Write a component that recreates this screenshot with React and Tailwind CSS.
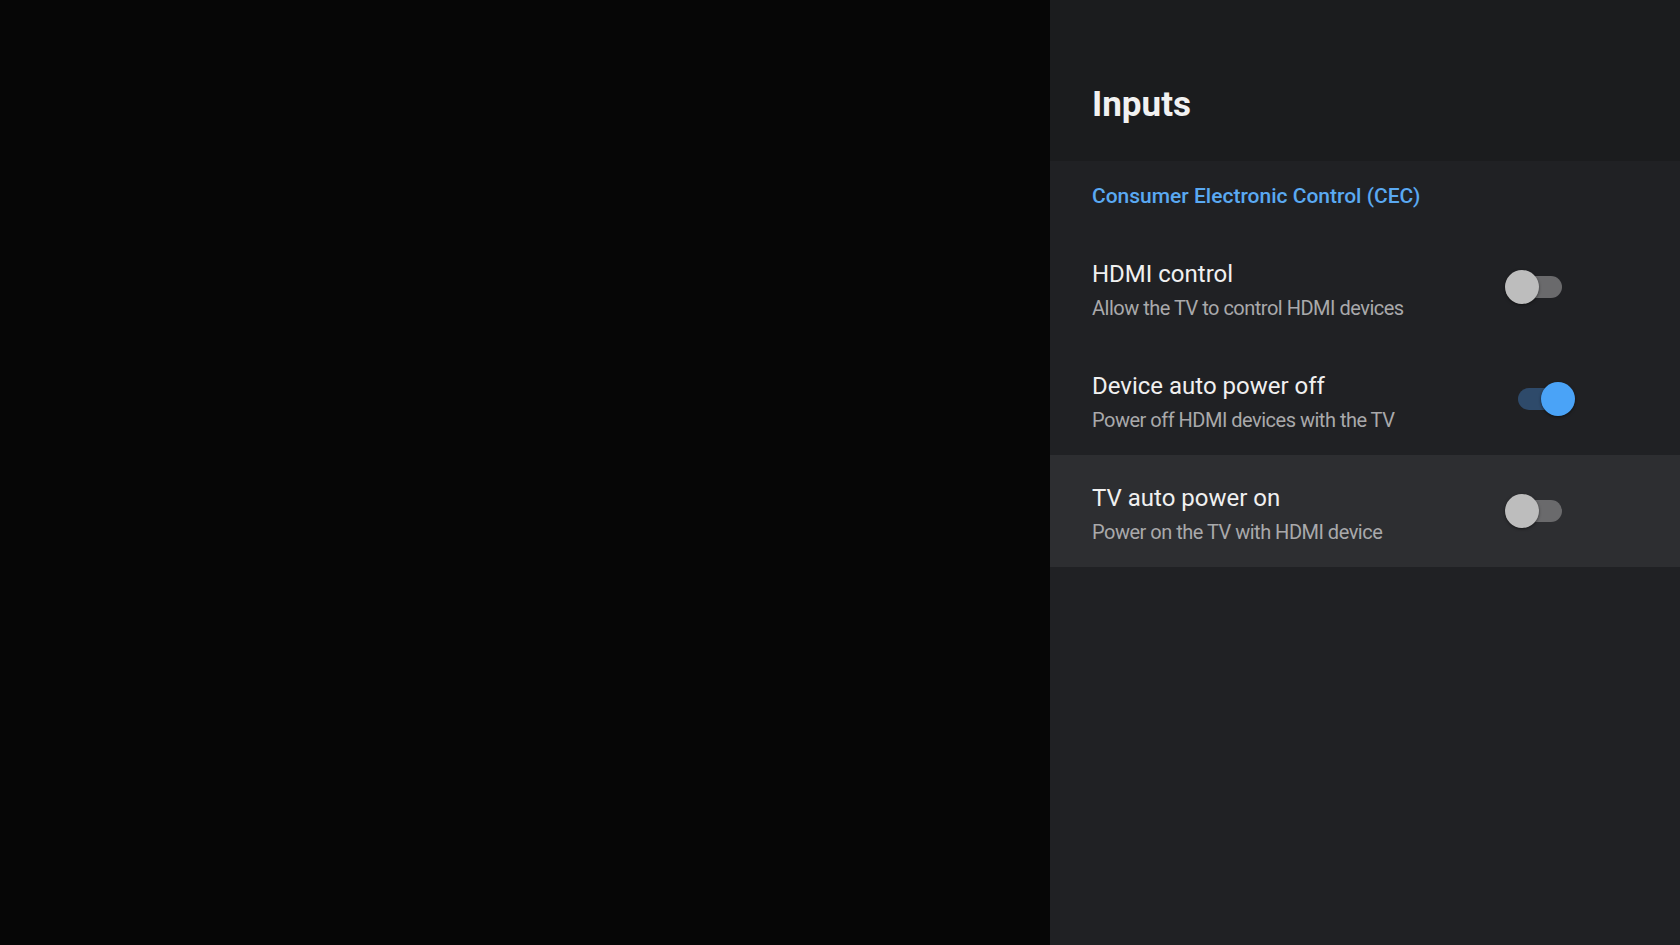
import React from 'react';

const rows = [
  { title: 'HDMI control', subtitle: 'Allow the TV to control HDMI devices', on: false, focused: false },
  { title: 'Device auto power off', subtitle: 'Power off HDMI devices with the TV', on: true, focused: false },
  { title: 'TV auto power on', subtitle: 'Power on the TV with HDMI device', on: false, focused: true },
];

function Toggle({ on }) {
  return (
    <div className="relative w-[70px] h-[34px] shrink-0">
      <div
        className={
          'absolute left-[13px] right-[13px] top-[6px] h-[22px] rounded-full ' +
          (on ? 'bg-[#2e4a6a]' : 'bg-[#6a6a6c]')
        }
      />
      <div
        className={
          'absolute top-0 w-[34px] h-[34px] rounded-full shadow-[0_1px_3px_rgba(0,0,0,0.5)] ' +
          (on ? 'right-0 bg-[#4aa3f7]' : 'left-0 bg-[#bdbdbd]')
        }
      />
    </div>
  );
}

export default function App() {
  return (
    <div className="w-[1680px] h-[945px] flex bg-[#060606] overflow-hidden" style={{ fontFamily: 'Roboto, "Noto Sans", sans-serif' }}>
      <div className="flex-1" />
      <div className="w-[630px] h-full flex flex-col bg-[#202124]">
        <div className="h-[161px] bg-[#1b1c1e] pt-[83px] pl-[42px]">
          <h1 className="text-[35px] leading-[44px] font-bold text-[#f1f1f1]">Inputs</h1>
        </div>
        <div className="h-[70px] flex items-center pl-[42px] pt-[2px]">
          <span className="text-[21px] font-medium text-[#5aa9f2]">Consumer Electronic Control (CEC)</span>
        </div>
        {rows.map((r) => (
          <div
            key={r.title}
            className={'h-[112px] flex items-center justify-between pl-[42px] pr-[105px] ' + (r.focused ? 'bg-[#2d2e31]' : '')}
          >
            <div className="flex flex-col pt-[6px]">
              <span className="text-[24px] leading-[30px] text-[#f0f0f0]">{r.title}</span>
              <span className="mt-[6px] text-[20px] leading-[26px] tracking-[-0.5px] text-[#a9a9ab]">{r.subtitle}</span>
            </div>
            <Toggle on={r.on} />
          </div>
        ))}
      </div>
    </div>
  );
}
